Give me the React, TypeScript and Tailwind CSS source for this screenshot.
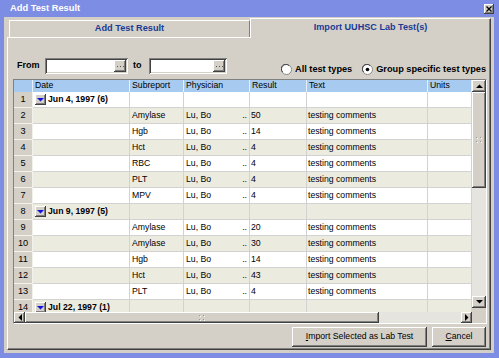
import React from "react";

type R = { n: number; group?: string; sub?: string; res?: string };

const rows: R[] = [
  { n: 1, group: "Jun 4, 1997 (6)" },
  { n: 2, sub: "Amylase", res: "50" },
  { n: 3, sub: "Hgb", res: "14" },
  { n: 4, sub: "Hct", res: "4" },
  { n: 5, sub: "RBC", res: "4" },
  { n: 6, sub: "PLT", res: "4" },
  { n: 7, sub: "MPV", res: "4" },
  { n: 8, group: "Jun 9, 1997 (5)" },
  { n: 9, sub: "Amylase", res: "20" },
  { n: 10, sub: "Amylase", res: "30" },
  { n: 11, sub: "Hgb", res: "14" },
  { n: 12, sub: "Hct", res: "43" },
  { n: 13, sub: "PLT", res: "4" },
  { n: 14, group: "Jul 22, 1997 (1)" },
];

const raised =
  "bg-[#d4d0c8] shadow-[inset_-1px_-1px_#404040,inset_1px_1px_#ffffff,inset_-2px_-2px_#808080,inset_2px_2px_#d4d0c8]";
const sunken =
  "bg-white shadow-[inset_1px_1px_#808080,inset_-1px_-1px_#ffffff,inset_2px_2px_#404040,inset_-2px_-2px_#d4d0c8]";

function Tri({ dir, color = "#000" }: { dir: "up" | "down" | "left" | "right"; color?: string }) {
  const pts =
    dir === "up"
      ? "0,4 7,4 3.5,0.5"
      : dir === "down"
      ? "0,0 7,0 3.5,3.5"
      : dir === "left"
      ? "4,0 4,7 0.5,3.5"
      : "0,0 0,7 3.5,3.5";
  const w = dir === "up" || dir === "down" ? 7 : 4;
  const h = dir === "up" || dir === "down" ? 4 : 7;
  return (
    <svg width={w} height={h} viewBox={`0 0 ${w} ${h}`}>
      <polygon points={pts} fill={color} />
    </svg>
  );
}

function Grip() {
  return (
    <svg width="6" height="6" viewBox="0 0 6 6">
      <rect x="0" y="0" width="1" height="1" fill="#9a9a9a" />
      <rect x="4" y="0" width="1" height="1" fill="#9a9a9a" />
      <rect x="0" y="4" width="1" height="1" fill="#9a9a9a" />
      <rect x="4" y="4" width="1" height="1" fill="#9a9a9a" />
      <rect x="1" y="1" width="1" height="1" fill="#ffffff" />
      <rect x="5" y="1" width="1" height="1" fill="#ffffff" />
      <rect x="1" y="5" width="1" height="1" fill="#ffffff" />
      <rect x="5" y="5" width="1" height="1" fill="#ffffff" />
    </svg>
  );
}

function DateInput({ wide }: { wide: boolean }) {
  return (
    <div
      className={`${wide ? "w-[83px]" : "w-[78px]"} h-[16px] ${sunken} flex items-center justify-end pr-[2px]`}
    >
      <div className={`w-[12px] h-[12px] ${raised} flex items-center justify-center`}>
        <svg width="7" height="3" viewBox="0 0 7 3">
          <rect x="0" y="1" width="1" height="1" fill="#555" />
          <rect x="3" y="1" width="1" height="1" fill="#555" />
          <rect x="6" y="1" width="1" height="1" fill="#555" />
        </svg>
      </div>
    </div>
  );
}

function Radio({ checked }: { checked: boolean }) {
  return (
    <svg width="11" height="11" viewBox="0 0 11 11">
      <circle cx="5.5" cy="5.5" r="5" fill="#ffffff" stroke="#8a8a8a" strokeWidth="1" />
      <path d="M1.6 8 A4.3 4.3 0 0 1 8 1.6" fill="none" stroke="#404040" strokeWidth="1" />
      {checked && <circle cx="5.5" cy="5.5" r="1.8" fill="#000" />}
    </svg>
  );
}

function DataRow({ r }: { r: R }) {
  const bg = r.n % 2 === 0 ? "bg-[#ecebe0]" : "bg-white";
  const cell = `${bg} border-r border-b border-[#d2d2d2] flex items-center overflow-hidden whitespace-nowrap`;
  return (
    <div className="flex h-[16px] shrink-0">
      <div className="w-[19px] bg-[#d4d0c8] border-r border-b border-[#f2f1ec] flex items-center justify-center text-[9.2px]">
        {r.n}
      </div>
      <div className={`w-[97px] ${cell}`}>
        {r.group && (
          <>
            <div className={`ml-[2px] w-[11px] h-[11px] shrink-0 ${raised} flex items-center justify-center`}>
              <Tri dir="down" color="#1010e0" />
            </div>
            <span className="ml-[2px] font-bold">{r.group}</span>
          </>
        )}
      </div>
      <div className={`w-[54px] pl-[2px] ${cell}`}>{r.sub}</div>
      <div className={`w-[66px] pl-[2px] pr-[2px] justify-between ${cell}`}>
        {r.sub && (
          <>
            <span>Lu, Bo</span>
            <span>..</span>
          </>
        )}
      </div>
      <div className={`w-[57px] pl-[1px] ${cell}`}>{r.res}</div>
      <div className={`w-[121px] pl-[1px] ${cell}`}>{r.sub ? "testing comments" : ""}</div>
      <div className={`w-[44px] ${cell}`}></div>
    </div>
  );
}

export default function App() {
  const head = "bg-[#a6caf0] border-r border-[#e6f0fa] pl-[2px] flex items-center";
  return (
    <div className="w-[499px] h-[358px] bg-[#7d8de3] flex flex-col pl-[4px] pr-[5px] pb-[5px] font-['Liberation_Sans',Arial,sans-serif] text-[8.7px] text-black overflow-hidden">
      {/* title bar */}
      <div className="h-[17px] shrink-0 flex items-center justify-between pl-[6px]">
        <span className="text-white font-bold text-[9.3px] leading-none">Add Test Result</span>
        <div className={`w-[10px] h-[10px] ${raised} flex items-center justify-center`}>
          <svg width="6" height="6" viewBox="0 0 6 6">
            <path d="M0.5 0.5 L5.5 5.5 M5.5 0.5 L0.5 5.5" stroke="#000" strokeWidth="1.3" />
          </svg>
        </div>
      </div>

      {/* client */}
      <div className="flex-1 bg-[#d4d0c8] flex flex-col px-[3px] pb-[3px] pt-[1px]">
        {/* tabs */}
        <div className="h-[19px] shrink-0 flex items-end">
          <div className="ml-[2px] w-[241px] h-[17px] border-t border-l border-white border-r border-r-[#808080] flex items-center justify-center">
            <span className="font-bold text-[9.2px] text-[#1a3a94]">Add Test Result</span>
          </div>
          <div className="w-[241px] h-[20px] -mb-[1px] relative z-10 bg-[#d4d0c8] border-t border-l border-white border-r border-r-[#404040] shadow-[inset_-1px_0_#808080] flex items-center justify-center pb-[1px]">
            <span className="font-bold text-[9.1px] text-[#1a3a94]">Import UUHSC Lab Test(s)</span>
          </div>
        </div>

        {/* panel */}
        <div className="flex-1 flex flex-col border-t border-l border-white border-r border-b border-r-[#404040] border-b-[#404040] shadow-[inset_-1px_-1px_#808080]">
          {/* filter row */}
          <div className="mt-[20px] h-[16px] shrink-0 flex items-start pl-[9px] pr-[4px]">
            <div className="flex items-center h-[16px]">
              <span className="w-[28px] font-bold text-[9px]">From</span>
              <DateInput wide={true} />
              <span className="ml-[5px] w-[16px] font-bold text-[9px]">to</span>
              <DateInput wide={false} />
            </div>
            <div className="ml-auto mt-[6px] h-[11px] flex items-center font-bold text-[9.2px]">
              <Radio checked={false} />
              <span className="ml-[3px]">All test types</span>
              <span className="ml-[10px] flex">
                <Radio checked={true} />
              </span>
              <span className="ml-[3px]">Group specific test types</span>
            </div>
          </div>

          {/* grid */}
          <div className="mt-[5px] ml-[5px] w-[474px] h-[245px] shrink-0 border-t border-l border-[#808080] border-b border-r border-b-white border-r-white flex flex-col bg-[#d4d0c8]">
            <div className="flex h-[232px]">
              <div className="w-[458px] overflow-hidden flex flex-col">
                <div className="flex h-[12px] shrink-0">
                  <div className={`w-[19px] ${head}`}></div>
                  <div className={`w-[97px] ${head}`}>Date</div>
                  <div className={`w-[54px] ${head}`}>Subreport</div>
                  <div className={`w-[66px] ${head}`}>Physician</div>
                  <div className={`w-[57px] ${head}`}>Result</div>
                  <div className={`w-[121px] ${head}`}>Text</div>
                  <div className={`w-[44px] ${head}`}>Units</div>
                </div>
                {rows.map((r) => (
                  <DataRow key={r.n} r={r} />
                ))}
              </div>
              {/* vertical scrollbar */}
              <div className="w-[14px] flex flex-col bg-[#e6e4de]">
                <div className={`h-[12px] shrink-0 ${raised} flex items-center justify-center`}>
                  <Tri dir="up" />
                </div>
                <div className={`h-[96px] shrink-0 ${raised} flex items-center justify-center`}>
                  <Grip />
                </div>
                <div className="flex-1"></div>
                <div className={`h-[12px] shrink-0 ${raised} flex items-center justify-center`}>
                  <Tri dir="down" />
                </div>
                <div className="h-[4px] shrink-0 bg-[#d4d0c8]"></div>
              </div>
            </div>
            {/* horizontal scrollbar */}
            <div className="flex h-[11px]">
              <div className="w-[458px] flex bg-[#e6e4de]">
                <div className={`w-[11px] shrink-0 ${raised} flex items-center justify-center`}>
                  <Tri dir="left" />
                </div>
                <div className={`w-[354px] shrink-0 ${raised} flex items-center justify-center`}>
                  <Grip />
                </div>
                <div className="flex-1"></div>
                <div className={`w-[11px] shrink-0 ${raised} flex items-center justify-center`}>
                  <Tri dir="right" />
                </div>
              </div>
              <div className="w-[14px] bg-[#d4d0c8]"></div>
            </div>
          </div>

          {/* buttons */}
          <div className="mt-[3px] h-[20px] shrink-0 flex justify-end gap-[5px] pr-[4px]">
            <div className={`w-[135px] h-[20px] ${raised} flex items-center justify-center`}>
              <span>
                <span className="underline">I</span>mport Selected as Lab Test
              </span>
            </div>
            <div className={`w-[54px] h-[20px] ${raised} flex items-center justify-center`}>
              <span>
                <span className="underline">C</span>ancel
              </span>
            </div>
          </div>
        </div>
      </div>
    </div>
  );
}
